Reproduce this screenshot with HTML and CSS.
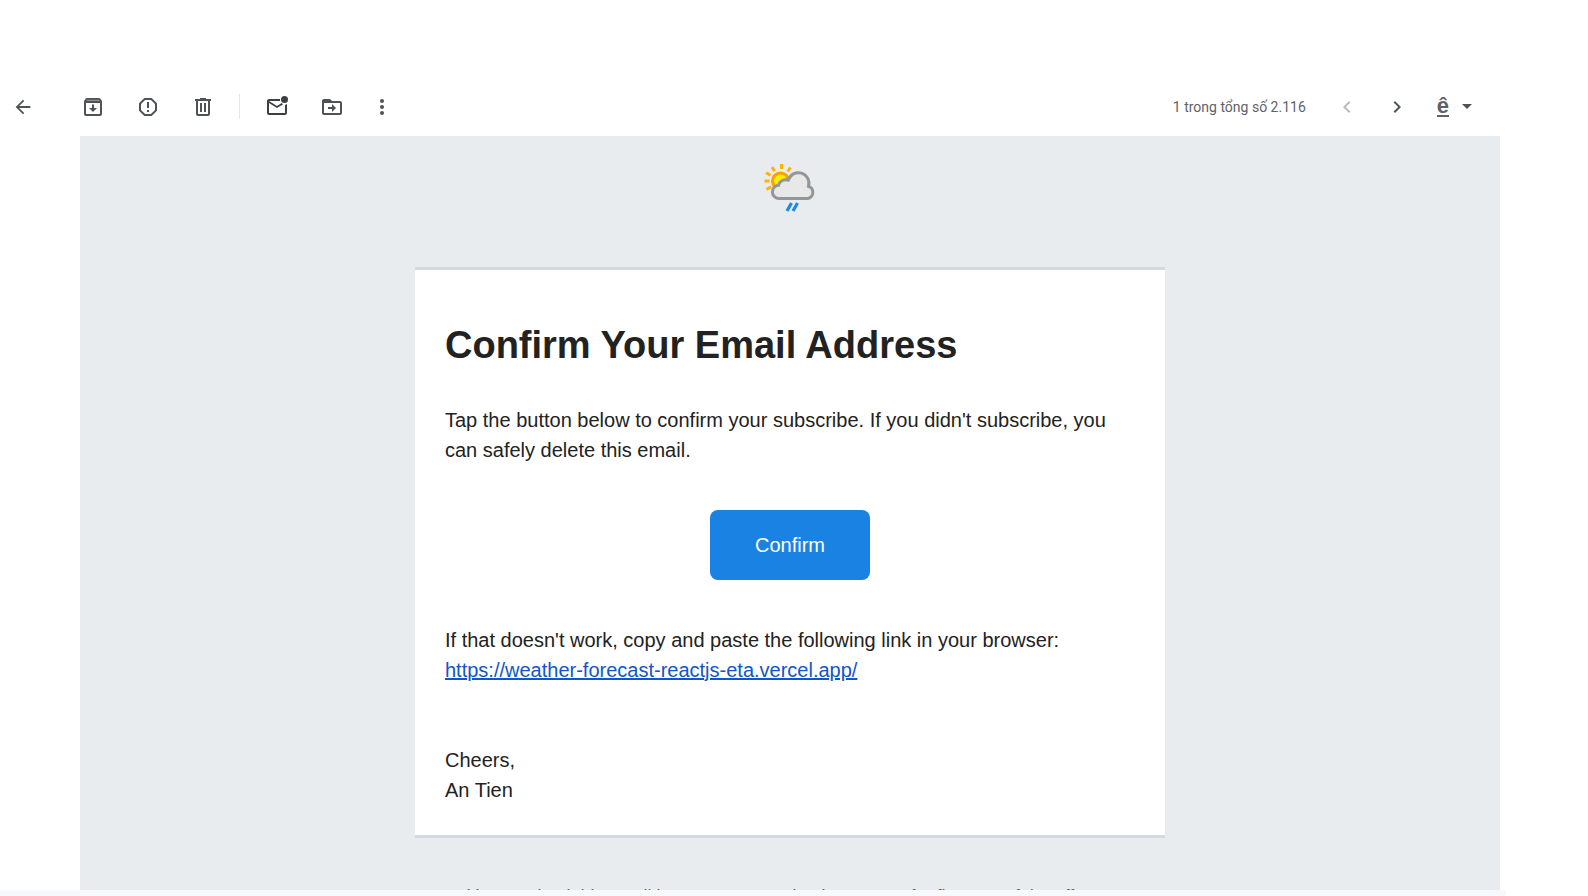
FILE: index.html
```html
<!DOCTYPE html>
<html lang="vi">
<head>
<meta charset="utf-8">
<meta name="viewport" content="width=device-width, initial-scale=1">
<title>Confirm Your Email Address</title>
<link rel="stylesheet" href="styles.css">
</head>
<body>
<header class="toolbar">
  <button class="icon-btn back" aria-label="Quay lại"><svg viewBox="0 0 24 24"><path d="M20 11H7.8l5.6-5.6L12 4l-8 8 8 8 1.400-1.400L7.800 13H20z"/></svg></button>
  <div class="actions">
    <button class="icon-btn" aria-label="Lưu trữ"><svg viewBox="0 0 24 24"><path fill-rule="evenodd" d="M20.500 5.200 19.200 3.500C18.900 3.200 18.500 3 18 3H6c-.5 0-.9.2-1.200.5L3.500 5.200C3.200 5.600 3 6 3 6.500V19c0 1.100.9 2 2 2h14c1.100 0 2-.9 2-2V6.500c0-.5-.2-.9-.5-1.300zM5 19V8h14v11z"/><path d="M11 9.500h2v3.500h3l-4 4-4-4h3z"/><path class="shade" d="M6 4.800h12l.8 1.200H5.200z"/></svg></button>
    <button class="icon-btn" aria-label="Báo cáo spam"><svg viewBox="0 0 24 24"><path fill-rule="evenodd" d="M15.700 3H8.300L3 8.300v7.400L8.300 21h7.400l5.300-5.300V8.300zM19 14.900 14.900 19H9.100L5 14.900V9.100L9.100 5h5.800L19 9.100z"/><path d="M11 7h2v6h-2zM11 15h2v2h-2z"/></svg></button>
    <button class="icon-btn" aria-label="Xóa"><svg viewBox="0 0 24 24"><path fill-rule="evenodd" d="M15 4V3H9v1H4v2h1v13c0 1.100.9 2 2 2h10c1.100 0 2-.9 2-2V6h1V4zM7 6h10v13H7z"/><path d="M9 8h2v9H9zM13 8h2v9h-2z"/></svg></button>
    <span class="divider"></span>
    <button class="icon-btn unread" aria-label="Đánh dấu là chưa đọc"><svg viewBox="0 0 24 24"><path d="M22 9v9c0 1.100-.9 2-2 2H4c-1.100 0-2-.9-2-2V6c0-1.100.9-2 2-2h11.100a5 5 0 0 0 0 2H4l8 5 4.700-3a5 5 0 0 0 1.500 1.200L12 13 4 8v10h16V10a5 5 0 0 0 2-1z"/><circle cx="19.500" cy="4.500" r="3.500"/></svg></button>
    <button class="icon-btn" aria-label="Chuyển tới"><svg viewBox="0 0 24 24"><path fill-rule="evenodd" d="M20 6h-8l-2-2H4c-1.100 0-2 .9-2 2v12c0 1.100.9 2 2 2h16c1.100 0 2-.9 2-2V8c0-1.100-.9-2-2-2zM4 8h16v10H4z"/><path d="M8 12h4V9l4 4-4 4v-3H8z"/></svg></button>
    <button class="icon-btn more" aria-label="Thêm"><svg viewBox="0 0 24 24"><circle cx="12" cy="6" r="2"/><circle cx="12" cy="12" r="2"/><circle cx="12" cy="18" r="2"/></svg></button>
  </div>
  <div class="pager">
    <span class="count">1 trong tổng số 2.116</span>
    <button class="icon-btn" aria-label="Mới hơn" disabled><svg viewBox="0 0 24 24"><path d="M15.400 7.400 14 6l-6 6 6 6 1.400-1.400L10.800 12z"/></svg></button>
    <button class="icon-btn" aria-label="Cũ hơn"><svg viewBox="0 0 24 24"><path d="M10 6 8.600 7.400l4.600 4.600-4.600 4.600L10 18l6-6z"/></svg></button>
    <button class="input-tool" aria-label="Công cụ nhập"><b>ê</b><svg viewBox="0 0 10 5"><path d="M0 0h10L5 5z"/></svg></button>
  </div>
</header>
<main class="mail">
  <svg class="logo" viewBox="0 0 60 60" role="img" aria-label="Weather">
    <g stroke="#ffb300" stroke-width="3" fill="none">
      <circle cx="20.500" cy="21" r="8" fill="#ffee00" stroke="#ffa000"/>
      <path d="M21.500 4v5M12 7l2.500 4.200M30.500 7.500l-2.800 4M6 12.800l4.500 2.500M4.500 21h5M6.500 29.500l4.500-2.700"/>
    </g>
    <path d="M19.500 38.500a6.600 6.600 0 0 1-1-13.200 7.500 7.500 0 0 1 9.800-5.200 10.500 10.500 0 0 1 20.200 6.300 6.300 6.300 0 0 1-.5 12.100z" fill="#e8e8e8" stroke="#949699" stroke-width="3"/>
    <path d="M31.500 43 27 51M37.500 43l-4.500 8" stroke="#1e88e5" stroke-width="3.200" fill="none"/>
  </svg>
  <article class="card">
    <h1>Confirm Your Email Address</h1>
    <p>Tap the button below to confirm your subscribe. If you didn't subscribe, you can safely delete this email.</p>
    <div class="cta"><button class="confirm">Confirm</button></div>
    <p>If that doesn't work, copy and paste the following link in your browser:<br><a href="https://weather-forecast-reactjs-eta.vercel.app/">https://weather-forecast-reactjs-eta.vercel.app/</a></p>
    <p class="sign">Cheers,<br>An Tien</p>
  </article>
  <p class="footnote">You received this email because we received a request for first use of the offer</p>
</main>
<div class="bottom-strip"></div>
</body>
</html>
```
FILE: styles.css
```css
* { box-sizing: border-box; }
body {
  margin: 0;
  height: 100vh;
  overflow: hidden;
  display: flex;
  flex-direction: column;
  padding-top: 76px;
  background: #fff;
  color: #222;
  font-family: "Liberation Sans", Arial, sans-serif;
}
button { border: 0; background: none; padding: 0; font: inherit; color: inherit; }
.toolbar {
  flex: none;
  display: flex;
  align-items: center;
  height: 60px;
  padding: 1px 116px 0 10px;
  color: #5f6368;
}
.icon-btn { width: 25px; height: 25px; display: flex; align-items: center; justify-content: center; }
.icon-btn svg { width: 24px; height: 24px; fill: #505356; }
.icon-btn:disabled svg { fill: #bbb; }
.back svg { width: 22px; height: 22px; }
.unread svg { fill: #3c4043; }
.actions { display: flex; align-items: center; gap: 30px; margin-left: 45px; }
.more { margin-left: -5px; }
.shade { fill: #8d8f91; }
.divider { width: 1px; height: 25px; background: #e4e6e8; margin: 0 -6px; }
.pager { display: flex; align-items: center; gap: 25px; margin-left: auto; }
.count { font: 14px/20px Roboto, sans-serif; margin-right: 4px; }
.input-tool { display: flex; align-items: center; gap: 13px; margin-left: 2px; }
.input-tool b { font-size: 22px; line-height: 18px; color: #5f6368; border-bottom: 2px solid #5f6368; }
.input-tool svg { width: 10px; height: 5px; fill: #505356; }
.mail {
  flex: 1;
  min-height: 0;
  overflow: hidden;
  margin: 0 88px 0 80px;
  background: #e9ecef;
  display: flex;
  flex-direction: column;
  align-items: center;
}
.logo { flex: none; width: 60px; height: 60px; margin: 24px 0 47px; }
.card {
  flex: none;
  width: 100%;
  max-width: 750px;
  padding: 45px 30px 30px;
  background: #fff;
  border-top: 3px solid #d4dadf;
  border-bottom: 3px solid #d4dadf;
  font-size: 20px;
  line-height: 30px;
}
h1 { margin: 0 0 30px; font-size: 38px; line-height: 60px; }
p { margin: 0; }
.cta { display: flex; justify-content: center; padding: 45px 0; }
.confirm { width: 160px; height: 70px; border-radius: 8px; background: #1a82e2; color: #fff; }
a { color: #15c; }
.sign { margin-top: 60px; }
.footnote { flex: none; width: 100%; max-width: 750px; padding: 0 52px; margin-top: 45px; font-size: 18px; line-height: 26px; color: #666; white-space: nowrap; }
.bottom-strip { flex: none; height: 6px; margin-right: 82px; background: #f6f8fc; }
```
